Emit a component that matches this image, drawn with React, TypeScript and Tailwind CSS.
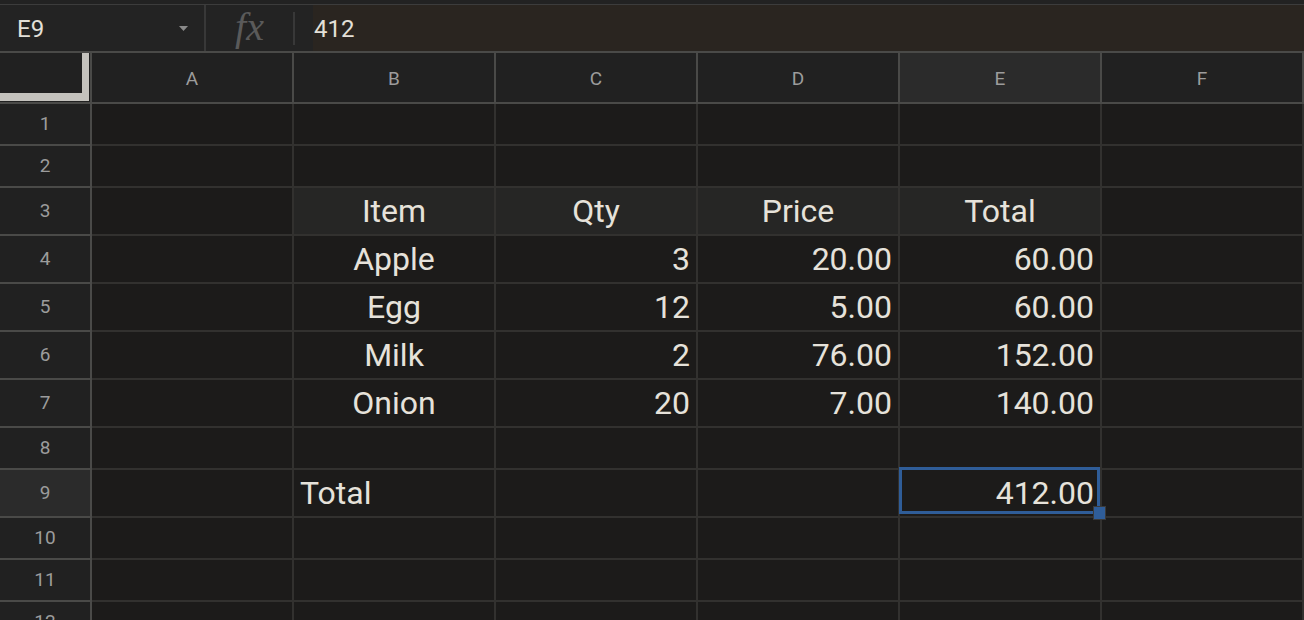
const COLS = ['A', 'B', 'C', 'D', 'E', 'F']

type Cell = { text: string; align: 'left' | 'center' | 'right'; head?: boolean }

const DATA: Record<number, Record<string, Cell>> = {
  3: {
    B: { text: 'Item', align: 'center', head: true },
    C: { text: 'Qty', align: 'center', head: true },
    D: { text: 'Price', align: 'center', head: true },
    E: { text: 'Total', align: 'center', head: true },
  },
  4: {
    B: { text: 'Apple', align: 'center' },
    C: { text: '3', align: 'right' },
    D: { text: '20.00', align: 'right' },
    E: { text: '60.00', align: 'right' },
  },
  5: {
    B: { text: 'Egg', align: 'center' },
    C: { text: '12', align: 'right' },
    D: { text: '5.00', align: 'right' },
    E: { text: '60.00', align: 'right' },
  },
  6: {
    B: { text: 'Milk', align: 'center' },
    C: { text: '2', align: 'right' },
    D: { text: '76.00', align: 'right' },
    E: { text: '152.00', align: 'right' },
  },
  7: {
    B: { text: 'Onion', align: 'center' },
    C: { text: '20', align: 'right' },
    D: { text: '7.00', align: 'right' },
    E: { text: '140.00', align: 'right' },
  },
  9: {
    B: { text: 'Total', align: 'left' },
    E: { text: '412.00', align: 'right' },
  },
}

const ROWS = [1, 2, 3, 4, 5, 6, 7, 8, 9, 10, 11, 12]

const ALIGN = {
  left: 'justify-start pl-[6px]',
  center: 'justify-center',
  right: 'justify-end pr-[6px]',
}

function FormulaBar() {
  return (
    <div className="h-[53px] bg-[#222222] pt-[4px]">
      <div className="h-[49px] flex border-t border-b-2 border-t-[#3c3c3c] border-b-[#4a4a48] bg-[#232323]">
        <div className="w-[206px] flex items-center justify-between pl-[17px] pr-[16px] pt-[1px] border-r-2 border-[#383838]">
          <span className="text-[24px] text-[#e3e0d8] leading-none">E9</span>
          <svg width="9" height="5" viewBox="0 0 9 5">
            <path d="M0 0h9L4.5 5z" fill="#8a8a8a" />
          </svg>
        </div>
        <div className="w-[87px] flex items-center justify-center pb-[2px]">
          <span className="font-['Liberation_Serif',serif] italic text-[40px] text-[#5a5a5a] leading-none">
            fx
          </span>
        </div>
        <div className="w-[2px] h-[33px] self-center bg-[#383838]" />
        <div className="w-[18px]" />
        <div className="flex-1 flex items-center bg-[#2a2520] pl-[1px] pt-[1px]">
          <span className="text-[24px] text-[#e3e0d8] leading-none">412</span>
        </div>
      </div>
    </div>
  )
}

export default function App() {
  return (
    <div className="w-[1304px] h-[620px] overflow-hidden bg-[#1c1b1a] font-['Roboto',sans-serif]">
      <FormulaBar />
      <div className="grid grid-cols-[92px_repeat(6,202px)] grid-rows-[51px_42px_42px_48px_48px_48px_48px_48px_42px_48px_42px_42px_42px]">
        <div className="relative bg-[#212121] border-r-2 border-b-2 border-[#4a4a48]">
          <div className="absolute top-0 right-[1px] w-[7px] h-[47px] bg-[#c4c2bd]" />
          <div className="absolute left-0 bottom-[1px] w-[89px] h-[8px] bg-[#c4c2bd]" />
        </div>
        {COLS.map((c) => (
          <div
            key={c}
            className={`flex items-center justify-center pt-[3px] border-r-2 border-b-2 border-[#4a4a48] text-[19px] text-[#9c9c9c] ${
              c === 'E' ? 'bg-[#2b2b2b]' : 'bg-[#212121]'
            }`}
          >
            {c}
          </div>
        ))}
        {ROWS.map((r) => (
          <RowCells key={r} r={r} />
        ))}
      </div>
    </div>
  )
}

function RowCells({ r }: { r: number }) {
  const row = DATA[r] || {}
  return (
    <>
      <div
        className={`flex items-center justify-center border-r-2 border-b-2 border-[#4a4a48] text-[19px] text-[#9c9c9c] ${
          r === 9 ? 'bg-[#2b2b2b]' : 'bg-[#212121]'
        }`}
      >
        {r}
      </div>
      {COLS.map((c) => {
        const cell = row[c]
        const selected = r === 9 && c === 'E'
        return (
          <div
            key={c}
            className={`relative flex items-center border-r-2 border-b-2 border-[#32312f] text-[32px] text-[#e6e2da] whitespace-nowrap ${
              cell?.head ? 'bg-[#262625]' : ''
            } ${cell ? ALIGN[cell.align] : ''}`}
          >
            {cell?.text}
            {selected && (
              <>
                <div className="absolute -left-[1px] -top-[3px] right-0 bottom-[2px] border-[3px] border-[#2f5d98] pointer-events-none" />
                <div className="absolute z-10 left-[193px] top-[36px] w-[13px] h-[14px] bg-[#2f5d98] border border-[#3a3a3a]" />
              </>
            )}
          </div>
        )
      })}
    </>
  )
}
